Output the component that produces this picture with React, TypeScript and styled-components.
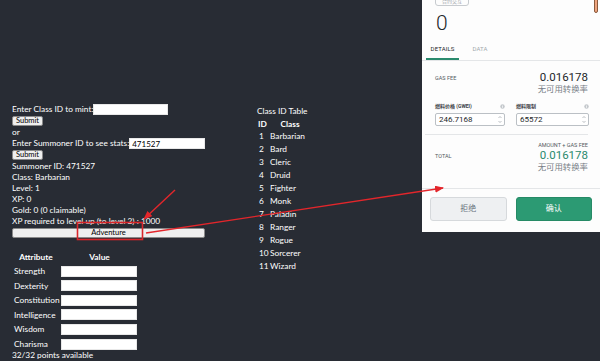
import React from "react";
import styled, { createGlobalStyle } from "styled-components";

const GlobalStyle = createGlobalStyle`
  html, body {
    margin: 0;
    padding: 0;
    background: #282c34;
  }
`;

const Page = styled.div`
  position: relative;
  display: flex;
  align-items: flex-start;
  width: 600px;
  height: 361px;
  overflow: hidden;
  background: #282c34;
  color: #fff;
  font-family: Lato, "Liberation Sans", sans-serif;
  font-size: 8.3px;
`;

const LeftColumn = styled.div`
  display: flex;
  flex-direction: column;
  align-items: flex-start;
  width: 200px;
  padding: 104px 0 0 12px;
`;

const Line = styled.div`
  display: flex;
  align-items: center;
  height: 11px;
  line-height: 11px;
  white-space: nowrap;
`;

const TextInput = styled.input<{ $w?: number }>`
  box-sizing: border-box;
  width: ${(p) => p.$w ?? 76}px;
  height: 11px;
  padding: 0 2px;
  border: 1px solid #e8e8e8;
  background: #fff;
  color: #000;
  font-family: Lato, "Liberation Sans", sans-serif;
  font-size: 8px;
  outline: none;
`;

const GrayButton = styled.button<{ $w: number }>`
  box-sizing: border-box;
  width: ${(p) => p.$w}px;
  height: 10px;
  margin: 1px 0;
  padding: 0;
  border: 1px solid #8a8a8a;
  border-radius: 2px;
  background: #efefef;
  color: #000;
  font-family: Lato, "Liberation Sans", sans-serif;
  font-size: 7.5px;
  line-height: 8px;
`;

const AttrGrid = styled.div`
  display: grid;
  grid-template-columns: 48px 77px;
  grid-auto-rows: 11px;
  column-gap: 1px;
  row-gap: 3.6px;
  margin-top: 12px;
  align-items: center;
`;

const AttrHead = styled.div`
  font-weight: 700;
  text-align: center;
`;

const AttrLabel = styled.div`
  padding-left: 2px;
  white-space: nowrap;
`;

const Footnote = styled.div`
  margin-top: 0;
  line-height: 11px;
`;

const ClassColumn = styled.div`
  margin-left: 45px;
  padding-top: 105px;
`;

const TableTitle = styled.div`
  height: 13px;
  line-height: 12px;
`;

const ClassGrid = styled.div`
  display: grid;
  grid-template-columns: 11px 40px;
  grid-template-rows: 11px;
  grid-auto-rows: 13px;
  align-items: center;
  margin-left: 2px;
  white-space: nowrap;
`;

const ClassHead = styled.div<{ $center?: boolean }>`
  margin-left: ${(p) => (p.$center ? 0 : -1)}px;
  font-weight: 700;
  text-align: ${(p) => (p.$center ? "center" : "left")};
`;

/* wallet confirm popup */

const Wallet = styled.div`
  position: relative;
  display: flex;
  flex-direction: column;
  width: 178px;
  height: 232px;
  margin-left: auto;
  overflow: hidden;
  background: #fdfdfd;
  color: #24272a;
  font-family: Roboto, "Noto Sans CJK SC", sans-serif;
`;

const Badge = styled.div`
  align-self: flex-start;
  box-sizing: border-box;
  width: 34px;
  height: 10px;
  margin: -4px 0 0 13px;
  border: 1px solid #c7cbcf;
  border-radius: 3px;
  color: #9ba1a6;
  font-size: 5px;
  line-height: 9px;
  text-align: center;
`;

const EdgeMark = styled.span`
  position: absolute;
  top: -2px;
  right: 2px;
  width: 2px;
  height: 13px;
  border: 0.5px solid #8a5a3c;
  border-radius: 0 0 2px 2px;
  background: #eea47f;
`;

const Amount = styled.div`
  margin: 5px 0 0 14px;
  font-size: 21px;
  font-weight: 300;
  line-height: 24px;
`;

const Tabs = styled.div`
  display: flex;
  margin-top: 9px;
  padding-left: 4px;
  border-bottom: 1px solid #e4e6e8;
`;

const Tab = styled.div<{ $active?: boolean }>`
  box-sizing: border-box;
  width: ${(p) => (p.$active ? 33 : 26)}px;
  margin-left: ${(p) => (p.$active ? 0 : 8)}px;
  padding-bottom: 4px;
  border-bottom: 2px solid ${(p) => (p.$active ? "#2a8a6d" : "transparent")};
  color: ${(p) => (p.$active ? "#24272a" : "#a3a9ae")};
  font-size: 6px;
  line-height: 10px;
  text-align: center;
  letter-spacing: 0.1px;
`;

const Section = styled.div<{ $pad: string }>`
  display: flex;
  flex-direction: column;
  padding: ${(p) => p.$pad};
`;

const FeeRow = styled.div`
  display: flex;
  justify-content: space-between;
  align-items: center;
`;

const SmallCaps = styled.div<{ $right?: boolean }>`
  color: #535a61;
  font-size: 5.5px;
  line-height: 8px;
  text-align: ${(p) => (p.$right ? "right" : "left")};
`;

const Value = styled.div<{ $green?: boolean }>`
  color: ${(p) => (p.$green ? "#2a8a6d" : "#24272a")};
  font-size: 11.5px;
  line-height: 13px;
  text-align: right;
`;

const NoRate = styled.div`
  color: #7a8188;
  font-size: 8.4px;
  line-height: 10px;
  text-align: right;
`;

const GasGrid = styled.div`
  display: grid;
  grid-template-columns: 70px 73px;
  column-gap: 11px;
  row-gap: 3px;
  margin-top: 9px;
`;

const GasLabel = styled.div`
  display: flex;
  justify-content: space-between;
  align-items: center;
  color: #3b4046;
  font-size: 5px;
  font-weight: 700;
  line-height: 7px;
`;

const GasInput = styled.div`
  display: flex;
  justify-content: space-between;
  align-items: center;
  box-sizing: border-box;
  height: 13px;
  padding: 0 2px 0 3px;
  border: 1px solid #bbc0c5;
  border-radius: 2px;
  background: #fff;
  font-size: 8px;
`;

const Divider = styled.div<{ $inset?: boolean }>`
  height: 1px;
  margin: ${(p) => (p.$inset ? "0 12px 0 3px" : "0")};
  background: #e4e6e8;
`;

const Actions = styled.div`
  display: flex;
  gap: 9px;
  padding: 8px 8px 0;
`;

const ActionButton = styled.div<{ $primary?: boolean }>`
  box-sizing: border-box;
  flex: 1;
  height: 24px;
  border: 1px solid ${(p) => (p.$primary ? "#268a66" : "#d6d9dc")};
  border-radius: 3px;
  background: ${(p) => (p.$primary ? "#2c9a73" : "#eef0f2")};
  color: ${(p) => (p.$primary ? "#fff" : "#6a737d")};
  font-size: 8px;
  line-height: 22px;
  text-align: center;
`;

const Overlay = styled.svg`
  position: absolute;
  top: 0;
  left: 0;
  pointer-events: none;
`;

const InfoDot = () => (
  <svg width="5" height="5" viewBox="0 0 10 10">
    <circle cx="5" cy="5" r="4.5" fill="#c4c8cc" />
    <rect x="4.3" y="4" width="1.4" height="3.6" fill="#fff" />
    <circle cx="5" cy="2.7" r="0.8" fill="#fff" />
  </svg>
);

const Spinner = () => (
  <svg width="4" height="9" viewBox="0 0 4 9">
    <path d="M0.5 3 L2 1.5 L3.5 3" stroke="#8d939a" strokeWidth="0.6" fill="none" />
    <path d="M0.5 6 L2 7.5 L3.5 6" stroke="#8d939a" strokeWidth="0.6" fill="none" />
  </svg>
);

const classes = [
  "Barbarian",
  "Bard",
  "Cleric",
  "Druid",
  "Fighter",
  "Monk",
  "Paladin",
  "Ranger",
  "Rogue",
  "Sorcerer",
  "Wizard",
];

const attributes = [
  "Strength",
  "Dexterity",
  "Constitution",
  "Intelligence",
  "Wisdom",
  "Charisma",
];

export default function App() {
  return (
    <Page>
      <GlobalStyle />
      <LeftColumn>
        <Line>
          Enter Class ID to mint:
          <TextInput $w={75} />
        </Line>
        <GrayButton $w={31}>Submit</GrayButton>
        <Line>or</Line>
        <Line>
          Enter Summoner ID to see stats:
          <TextInput $w={76} defaultValue="471527" />
        </Line>
        <GrayButton $w={31}>Submit</GrayButton>
        <Line>Summoner ID: 471527</Line>
        <Line>Class: Barbarian</Line>
        <Line>Level: 1</Line>
        <Line>XP: 0</Line>
        <Line>Gold: 0 (0 claimable)</Line>
        <Line>XP required to level up (to level 2) : 1000</Line>
        <GrayButton $w={193}>Adventure</GrayButton>
        <AttrGrid>
          <AttrHead>Attribute</AttrHead>
          <AttrHead>Value</AttrHead>
          {attributes.map((a) => (
            <React.Fragment key={a}>
              <AttrLabel>{a}</AttrLabel>
              <TextInput $w={76} />
            </React.Fragment>
          ))}
        </AttrGrid>
        <Footnote>32/32 points available</Footnote>
      </LeftColumn>

      <ClassColumn>
        <TableTitle>Class ID Table</TableTitle>
        <ClassGrid>
          <ClassHead>ID</ClassHead>
          <ClassHead $center>Class</ClassHead>
          {classes.map((c, i) => (
            <React.Fragment key={c}>
              <div>{i + 1}</div>
              <div>{c}</div>
            </React.Fragment>
          ))}
        </ClassGrid>
      </ClassColumn>

      <Wallet>
        <Badge>合约交互</Badge>
        <EdgeMark />
        <Amount>0</Amount>
        <Tabs>
          <Tab $active>DETAILS</Tab>
          <Tab>DATA</Tab>
        </Tabs>
        <Section $pad="10px 12px 8px 13px">
          <FeeRow>
            <SmallCaps>GAS FEE</SmallCaps>
            <Value>0.016178</Value>
          </FeeRow>
          <NoRate>无可用转换率</NoRate>
          <GasGrid>
            <GasLabel>
              燃料价格 (GWEI)
              <InfoDot />
            </GasLabel>
            <GasLabel>
              燃料限制
              <InfoDot />
            </GasLabel>
            <GasInput>
              246.7168
              <Spinner />
            </GasInput>
            <GasInput>
              65572
              <Spinner />
            </GasInput>
          </GasGrid>
        </Section>
        <Divider $inset />
        <Section $pad="6px 12px 16px 13px">
          <SmallCaps $right>AMOUNT + GAS FEE</SmallCaps>
          <FeeRow>
            <SmallCaps>TOTAL</SmallCaps>
            <Value $green>0.016178</Value>
          </FeeRow>
          <NoRate>无可用转换率</NoRate>
        </Section>
        <Divider />
        <Actions>
          <ActionButton>拒绝</ActionButton>
          <ActionButton $primary>确认</ActionButton>
        </Actions>
      </Wallet>

      <Overlay width="600" height="361" viewBox="0 0 600 361">
        <defs>
          <marker
            id="head"
            markerWidth="9"
            markerHeight="7"
            refX="8"
            refY="3.5"
            orient="auto"
            markerUnits="userSpaceOnUse"
          >
            <path d="M0 0 L9 3.5 L0 7 Z" fill="#e3262b" />
          </marker>
        </defs>
        <rect x="77.5" y="222.5" width="65" height="17" fill="none" stroke="#d9262b" strokeWidth="1.6" />
        <line x1="175" y1="190" x2="144" y2="219" stroke="#e3262b" strokeWidth="1.4" markerEnd="url(#head)" />
        <line x1="146" y1="233" x2="443" y2="188" stroke="#e3262b" strokeWidth="1.4" markerEnd="url(#head)" />
      </Overlay>
    </Page>
  );
}
